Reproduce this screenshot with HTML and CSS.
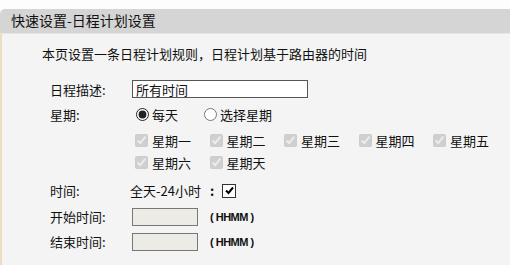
FILE: index.html
```html
<!DOCTYPE html>
<html lang="zh-CN">
<head>
    <meta charset="UTF-8">
    <title>快速设置-日程计划设置</title>
    <link rel="stylesheet" href="styles.css">
</head>
<body>
    <div class="panel">
        <div class="panel-title">快速设置-日程计划设置</div>
        <div class="panel-body">
            <p class="intro">本页设置一条日程计划规则，日程计划基于路由器的时间</p>

            <div class="row row-desc">
                <span class="label">日程描述:</span>
                <input class="text-input wide" type="text" value="所有时间">
            </div>

            <div class="row row-week">
                <span class="label">星期:</span>
                <label class="radio"><input type="radio" name="day" checked>每天</label>
                <label class="radio"><input type="radio" name="day">选择星期</label>
            </div>

            <div class="row row-days">
                <span class="label"></span>
                <div class="days">
                    <label class="day"><input type="checkbox" checked disabled>星期一</label>
                    <label class="day"><input type="checkbox" checked disabled>星期二</label>
                    <label class="day"><input type="checkbox" checked disabled>星期三</label>
                    <label class="day"><input type="checkbox" checked disabled>星期四</label>
                    <label class="day"><input type="checkbox" checked disabled>星期五</label>
                    <label class="day"><input type="checkbox" checked disabled>星期六</label>
                    <label class="day"><input type="checkbox" checked disabled>星期天</label>
                </div>
            </div>

            <div class="row row-time">
                <span class="label">时间:</span>
                <span class="allday">全天-24小时</span>
                <span class="colon">:</span>
                <span class="check-box">
                    <svg width="11" height="11" viewBox="0 0 11 11"><path d="M2 5.5 L4.5 8 L9 2.5" fill="none" stroke="#000" stroke-width="2"/></svg>
                </span>
            </div>

            <div class="row">
                <span class="label">开始时间:</span>
                <input class="text-input short" type="text" disabled>
                <span class="hint">( HHMM )</span>
            </div>

            <div class="row">
                <span class="label">结束时间:</span>
                <input class="text-input short" type="text" disabled>
                <span class="hint">( HHMM )</span>
            </div>
        </div>
    </div>
</body>
</html>
```

FILE: styles.css
```css
body {
    margin: 0;
    background-color: #fdfdfd;
    font-family: "Noto Sans CJK SC", "Liberation Sans", sans-serif;
    font-size: 13px;
    color: #111;
}
.panel {
    padding-top: 9px;
}
.panel-title {
    height: 24px;
    line-height: 23px;
    padding-left: 11px;
    background-color: #d5d5d5;
    border-top-left-radius: 5px;
    border-bottom: 1px solid #e6e6e6;
    font-size: 14px;
}
.panel-body {
    background-color: #f4f4f4;
    border-left: 2px solid #ecdcc0;
    height: 232px;
    padding-left: 48px;
}
.intro {
    margin: 0;
    padding-top: 10px;
    height: 33px;
    line-height: 20px;
    margin-left: -8px;
}
.row {
    display: flex;
    align-items: center;
    height: 25px;
}
.row-desc {
    height: 24px;
}
.row-week {
    height: 26px;
}
.row-days {
    align-items: flex-start;
    height: 50px;
    padding-top: 2px;
    box-sizing: border-box;
}
.row-time {
    height: 27px;
}
.label {
    width: 82px;
    flex: none;
}
.text-input {
    height: 18px;
    box-sizing: border-box;
    margin: 0;
    border: 1px solid #555;
    font-family: inherit;
    font-size: 13px;
    padding: 0 3px;
    background: #fff;
    color: #111;
}
.text-input.wide {
    width: 176px;
}
.text-input.short {
    width: 66px;
    background: #ecebe6;
    border: 1px solid #777;
}
.radio {
    display: flex;
    align-items: center;
    margin-right: 22px;
    margin-left: 2px;
}
.radio input {
    margin: 0 3px 0 2px;
    width: 13px;
    height: 13px;
    accent-color: #222;
}
.days {
    display: flex;
    flex-wrap: wrap;
    width: 380px;
}
.day {
    display: flex;
    align-items: center;
    width: 74.5px;
    height: 22px;
    color: #111;
}
.day input {
    margin: 0 4px 0 3px;
    width: 13px;
    height: 13px;
}
.allday {
    margin-left: -2px;
}
.colon {
    margin-left: 9px;
    font-weight: bold;
}
.check-box {
    display: flex;
    align-items: center;
    justify-content: center;
    width: 14px;
    height: 14px;
    box-sizing: border-box;
    margin-left: 8px;
    border: 1px solid #333;
    background: #fff;
}
.hint {
    margin-left: 12px;
    font-family: "Liberation Sans", sans-serif;
    font-size: 11px;
    font-weight: bold;
    letter-spacing: -0.5px;
    white-space: pre;
}
```
